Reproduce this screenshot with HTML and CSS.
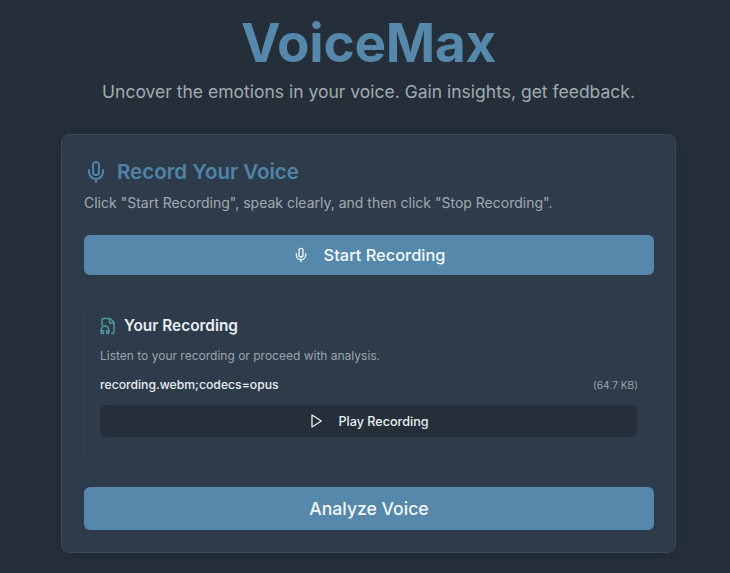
FILE: index.html
```html
<!DOCTYPE html>
<html lang="en">
<head>
<meta charset="utf-8">
<title>VoiceMax</title>
<link rel="stylesheet" href="styles.css">
</head>
<body>
<main class="page">
  <header class="hero">
    <h1 class="brand">VoiceMax</h1>
    <p class="tagline">Uncover the emotions in your voice. Gain insights, get feedback.</p>
  </header>
  <section class="card">
    <h2 class="card-title">
      <svg class="icon-lg" viewBox="0 0 24 24" fill="none" stroke="currentColor" stroke-width="2" stroke-linecap="round" stroke-linejoin="round"><path d="M12 2a3 3 0 0 0-3 3v7a3 3 0 0 0 6 0V5a3 3 0 0 0-3-3Z"/><path d="M19 10v2a7 7 0 0 1-14 0v-2"/><line x1="12" x2="12" y1="19" y2="22"/></svg>
      <span>Record Your Voice</span>
    </h2>
    <p class="card-desc">Click "Start Recording", speak clearly, and then click "Stop Recording".</p>
    <button class="btn btn-start">
      <svg class="icon-sm" viewBox="0 0 24 24" fill="none" stroke="currentColor" stroke-width="2" stroke-linecap="round" stroke-linejoin="round"><path d="M12 2a3 3 0 0 0-3 3v7a3 3 0 0 0 6 0V5a3 3 0 0 0-3-3Z"/><path d="M19 10v2a7 7 0 0 1-14 0v-2"/><line x1="12" x2="12" y1="19" y2="22"/></svg>
      <span>Start Recording</span>
    </button>
    <section class="panel">
      <h3 class="panel-title">
        <svg class="icon-file" viewBox="0 0 24 24" fill="none" stroke="currentColor" stroke-width="2" stroke-linecap="round" stroke-linejoin="round"><path d="M4 11V4a2 2 0 0 1 2-2h8a2.4 2.4 0 0 1 1.7.7l3.6 3.6A2.4 2.4 0 0 1 20 8v12a2 2 0 0 1-2 2h-1"/><path d="M14 2v5a1 1 0 0 0 1 1h5"/><path d="M3 20v-3a5 5 0 0 1 10 0v3"/><path d="M13 18h-2a1 1 0 0 0-1 1v2a1 1 0 0 0 1 1h1a1 1 0 0 0 1-1Z"/><path d="M3 18h2a1 1 0 0 1 1 1v2a1 1 0 0 1-1 1H4a1 1 0 0 1-1-1Z"/></svg>
        <span>Your Recording</span>
      </h3>
      <p class="panel-desc">Listen to your recording or proceed with analysis.</p>
      <div class="file-row">
        <span class="file-name">recording.webm;codecs=opus</span>
        <span class="file-size">(64.7 KB)</span>
      </div>
      <button class="btn-play">
        <svg class="icon-play" viewBox="0 0 24 24" fill="none" stroke="currentColor" stroke-width="2" stroke-linecap="round" stroke-linejoin="round"><polygon points="6 3 20 12 6 21 6 3"/></svg>
        <span>Play Recording</span>
      </button>
    </section>
    <button class="btn btn-analyze">Analyze Voice</button>
  </section>
</main>
</body>
</html>
```
FILE: styles.css
```css
* { box-sizing: border-box; }
html, body { margin: 0; height: 100%; }
body {
  background: #242f39;
  color: #e6edf2;
  font-family: Inter, "Liberation Sans", sans-serif;
  overflow: hidden;
}
.page {
  width: 615px;
  margin-left: 61px;
  display: flex;
  flex-direction: column;
}
.hero { text-align: center; padding-top: 12px; }
.brand {
  margin: 0;
  font-size: 53px;
  line-height: 62px;
  font-weight: 700;
  color: #5588ab;
  letter-spacing: -0.2px;
}
.tagline {
  margin: 4px 0 0;
  font-size: 17.5px;
  line-height: 28px;
  color: #a1aab2;
}
.card {
  margin-top: 28px;
  height: 419px;
  background: #2e3b4a;
  border: 1px solid #3b4a59;
  border-radius: 8px;
  padding: 23px 21px 22px 22px;
  box-shadow: 0 4px 14px rgba(0, 0, 0, .12);
}
.card-title {
  margin: 0;
  display: flex;
  align-items: center;
  gap: 9px;
  font-size: 20.5px;
  line-height: 28px;
  font-weight: 600;
  color: #4f84a8;
}
.icon-lg { width: 24px; height: 24px; }
.card-desc {
  margin: 7px 0 0;
  font-size: 14px;
  line-height: 20px;
  color: #a1aab2;
}
.btn {
  display: flex;
  align-items: center;
  justify-content: center;
  width: 100%;
  border: 0;
  border-radius: 6px;
  background: #5588ab;
  color: #f4f8fb;
  font-family: inherit;
  font-weight: 500;
}
.btn-start {
  margin-top: 22px;
  height: 40px;
  gap: 15px;
  font-size: 16.4px;
}
.icon-sm { width: 16px; height: 16px; }
.panel {
  margin-top: 25px;
  height: 162px;
  border: 1px solid #333f4e;
  border-radius: 8px;
  padding: 15px;
}
.panel-title {
  margin: 0;
  display: flex;
  align-items: center;
  gap: 7px;
  font-size: 15.4px;
  line-height: 20px;
  font-weight: 600;
  color: #e6edf2;
}
.icon-file { width: 18px; height: 18px; margin-left: -1px; color: #4f9a9c; }
.panel-desc {
  margin: 11px 0 0;
  font-size: 12px;
  line-height: 18px;
  color: #9aa4ad;
}
.file-row {
  margin-top: 11px;
  display: flex;
  justify-content: space-between;
  align-items: center;
  line-height: 18px;
}
.file-name { font-size: 12.2px; font-weight: 500; color: #e6edf2; }
.file-size { font-size: 10.2px; color: #9aa4ad; }
.btn-play {
  margin-top: 11px;
  display: flex;
  align-items: center;
  justify-content: center;
  gap: 14px;
  width: calc(100% - 1px);
  height: 32px;
  border: 0;
  border-radius: 6px;
  background: #242f39;
  color: #e6edf2;
  font-family: inherit;
  font-size: 12.6px;
  font-weight: 500;
}
.icon-play { width: 16px; height: 16px; }
.btn-analyze {
  margin-top: 25px;
  height: 43px;
  font-size: 17.6px;
}
```
